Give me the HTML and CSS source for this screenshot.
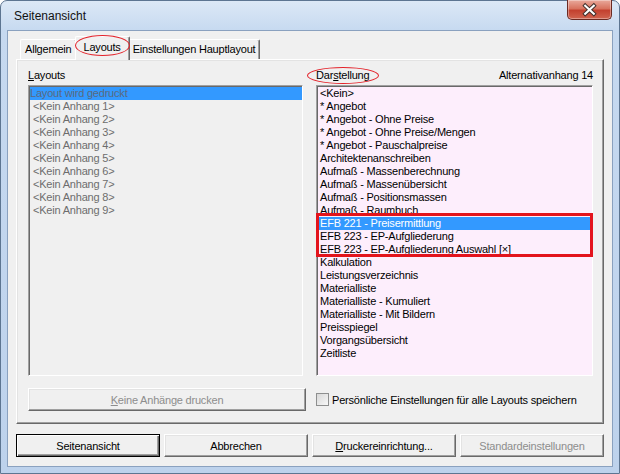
FILE: index.html
```html
<!DOCTYPE html>
<html lang="de">
<head>
  <meta charset="UTF-8" />
  <title>Seitenansicht</title>
  <link rel="stylesheet" href="styles.css">
</head>
<body>

  <div class="window">
    <div class="titlebar">
      <span class="title">Seitenansicht</span>
      <button class="close" title="Schließen">
        <svg width="45" height="20" viewBox="0 0 45 20">
          <path d="M18 5.5 L27 14 M27 5.5 L18 14" stroke="#40302c" stroke-width="4.2" stroke-linecap="square" fill="none"/>
          <path d="M18 5.5 L27 14 M27 5.5 L18 14" stroke="#fff" stroke-width="2.2" stroke-linecap="square" fill="none"/>
        </svg>
      </button>
    </div>

    <div class="client">
      <div class="tabs">
        <div class="tab">Allgemein</div>
        <div class="tab active">Layouts<span class="ring ring-tab"></span></div>
        <div class="tab">Einstellungen Hauptlayout</div>
      </div>

      <div class="panel">
        <div class="cols">
          <div class="col">
            <div class="col-head"><span><u>L</u>ayouts</span></div>
            <ul class="list list-off">
              <li class="sel first">Layout wird gedruckt</li>
              <li>&lt;Kein Anhang 1&gt;</li>
              <li>&lt;Kein Anhang 2&gt;</li>
              <li>&lt;Kein Anhang 3&gt;</li>
              <li>&lt;Kein Anhang 4&gt;</li>
              <li>&lt;Kein Anhang 5&gt;</li>
              <li>&lt;Kein Anhang 6&gt;</li>
              <li>&lt;Kein Anhang 7&gt;</li>
              <li>&lt;Kein Anhang 8&gt;</li>
              <li>&lt;Kein Anhang 9&gt;</li>
            </ul>
          </div>

          <div class="col">
            <div class="col-head">
              <span class="head-label">Dar<u>s</u>tellung<span class="ring ring-label"></span></span>
              <span>Alternativanhang 14</span>
            </div>
            <ul class="list list-pink">
              <li>&lt;Kein&gt;</li>
              <li>* Angebot</li>
              <li>* Angebot - Ohne Preise</li>
              <li>* Angebot - Ohne Preise/Mengen</li>
              <li>* Angebot - Pauschalpreise</li>
              <li>Architektenanschreiben</li>
              <li>Aufmaß - Massenberechnung</li>
              <li>Aufmaß - Massenübersicht</li>
              <li>Aufmaß - Positionsmassen</li>
              <li>Aufmaß - Raumbuch</li>
              <li class="sel">EFB 221 - Preisermittlung</li>
              <li>EFB 223 - EP-Aufgliederung</li>
              <li>EFB 223 - EP-Aufgliederung Auswahl [×]</li>
              <li>Kalkulation</li>
              <li>Leistungsverzeichnis</li>
              <li>Materialliste</li>
              <li>Materialliste - Kumuliert</li>
              <li>Materialliste - Mit Bildern</li>
              <li>Preisspiegel</li>
              <li>Vorgangsübersicht</li>
              <li>Zeitliste</li>
              <span class="mark"></span>
            </ul>
          </div>
        </div>

        <div class="options">
          <button class="btn" disabled><u>K</u>eine Anhänge drucken</button>
          <label class="check">
            <span class="box"></span>
            <span>Persönliche Einstellungen für alle Layouts speichern</span>
          </label>
        </div>
      </div>

      <div class="actions">
        <button class="btn default">Seitenansicht</button>
        <button class="btn">Abbrechen</button>
        <button class="btn"><u>D</u>ruckereinrichtung...</button>
        <button class="btn" disabled>Standardeinstellungen</button>
      </div>
    </div>
  </div>

</body>
</html>
```

FILE: styles.css
```css
body {
  margin: 0;
  background: #fff;
  font-family: "Liberation Sans", Arial, sans-serif;
  font-size: 11px;
  letter-spacing: -0.2px;
  color: #000;
}

u {
  text-decoration: underline;
  text-underline-offset: 1px;
}

.window {
  width: 620px;
  height: 474px;
  box-sizing: border-box;
  border: 1px solid #5d7591;
  border-radius: 7px 7px 0 0;
  background: linear-gradient(#dce8f6, #c6d9f0 30px, #bdd2ec);
  padding: 0 6px 6px;
  display: flex;
  flex-direction: column;
}

/* Titelleiste */
.titlebar {
  height: 29px;
  display: flex;
  justify-content: space-between;
  align-items: flex-start;
}

.title {
  margin: 8px 0 0 7px;
  font-size: 12px;
  letter-spacing: 0;
  color: #111;
}

.close {
  width: 45px;
  height: 20px;
  margin: -1px 1px 0 0;
  padding: 0;
  border: 1px solid #6b2a22;
  border-top: none;
  border-radius: 0 0 5px 5px;
  background: linear-gradient(#e9a99c, #d8735f 45%, #c3412f 55%, #d0644f);
  box-shadow: inset 0 0 0 1px rgba(255, 255, 255, 0.35);
  display: flex;
  align-items: center;
  justify-content: center;
}

.close svg {
  display: block;
}

/* Clientbereich */
.client {
  flex: 1;
  background: #f0f0f0;
  border: 1px solid #8aa1bf;
  padding: 6px 8px 9px;
  display: flex;
  flex-direction: column;
}

.tabs {
  display: flex;
  align-items: flex-end;
  height: 22px;
  padding-left: 4px;
  position: relative;
  z-index: 1;
}

.tab {
  height: 19px;
  line-height: 18px;
  padding: 0 4px;
  background: #f0f0f0;
  border: 1px solid;
  border-color: #fff #696969 transparent #fff;
  border-bottom: none;
  border-radius: 2px 2px 0 0;
  box-shadow: inset -1px 0 #a0a0a0;
  white-space: nowrap;
}

.tab.active {
  height: 23px;
  line-height: 21px;
  margin: 0 -2px -1px;
  padding: 0 8px;
  position: relative;
  z-index: 2;
}

.ring {
  position: absolute;
  border: 1px solid #e3222a;
  border-radius: 50%;
  pointer-events: none;
}

.ring-tab {
  left: -1px;
  top: -2px;
  width: 53px;
  height: 19px;
}

.ring-label {
  left: -9px;
  top: -2px;
  width: 70px;
  height: 15px;
}

.panel {
  height: 365px;
  box-sizing: border-box;
  border: 1px solid;
  border-color: #fff #696969 #696969 #fff;
  box-shadow: inset -1px -1px #a0a0a0, inset 1px 1px #e3e3e3;
  padding: 9px 10px 12px 11px;
  display: flex;
  flex-direction: column;
}

.cols {
  flex: 1;
  display: grid;
  grid-template-columns: 275px 277px;
  column-gap: 13px;
}

.col {
  display: flex;
  flex-direction: column;
}

.col-head {
  height: 13px;
  line-height: 13px;
  margin-bottom: 3px;
  display: flex;
  justify-content: space-between;
}

.head-label {
  position: relative;
}

.list {
  flex: 1;
  margin: 0;
  padding: 1px 0 0;
  list-style: none;
  border: 1px solid;
  border-color: #a0a0a0 #fff #fff #a0a0a0;
  box-shadow: inset 1px 1px #696969;
  position: relative;
}

.list li {
  height: 13px;
  line-height: 13px;
  padding-left: 3px;
  margin-left: 1px;
  white-space: nowrap;
}

.list-off {
  background: #f0f0f0;
  color: #6d6d6d;
}

.list-off li.first {
  padding-left: 0;
}

.list-off .sel {
  background: #3399ff;
  color: #5a6a80;
}

.list-pink {
  background: #fdeefc;
}

.list-pink li {
  padding-left: 2px;
}

.list-pink .sel {
  background: #3399ff;
  color: #fff;
}

.mark {
  position: absolute;
  left: -1px;
  top: 127px;
  width: 277px;
  height: 44px;
  box-sizing: border-box;
  border: 3px solid #e3141c;
}

/* Knöpfe */
.btn {
  height: 23px;
  box-sizing: border-box;
  padding: 0;
  font: inherit;
  letter-spacing: inherit;
  color: #000;
  background: #f0f0f0;
  border: 1px solid;
  border-color: #fff #696969 #696969 #fff;
  box-shadow: inset -1px -1px #a0a0a0, inset 1px 1px #e3e3e3;
}

.btn:disabled {
  color: #8d8d8d;
}

.btn.default {
  border-color: #000;
  box-shadow: inset 1px 1px #fff, inset -1px -1px #696969, inset -2px -2px #a0a0a0;
}

.options {
  display: grid;
  grid-template-columns: 278px 1fr;
  column-gap: 10px;
  align-items: center;
  margin-top: 12px;
  height: 23px;
}

.check {
  display: flex;
  align-items: center;
  gap: 3px;
  white-space: nowrap;
}

.box {
  width: 13px;
  height: 13px;
  box-sizing: border-box;
  border: 1px solid #8e8f8f;
  background: linear-gradient(135deg, #d8d8d8, #f8f8f8);
}

.actions {
  display: grid;
  grid-template-columns: repeat(4, 1fr);
  gap: 4px;
  margin-top: 10px;
}
```
